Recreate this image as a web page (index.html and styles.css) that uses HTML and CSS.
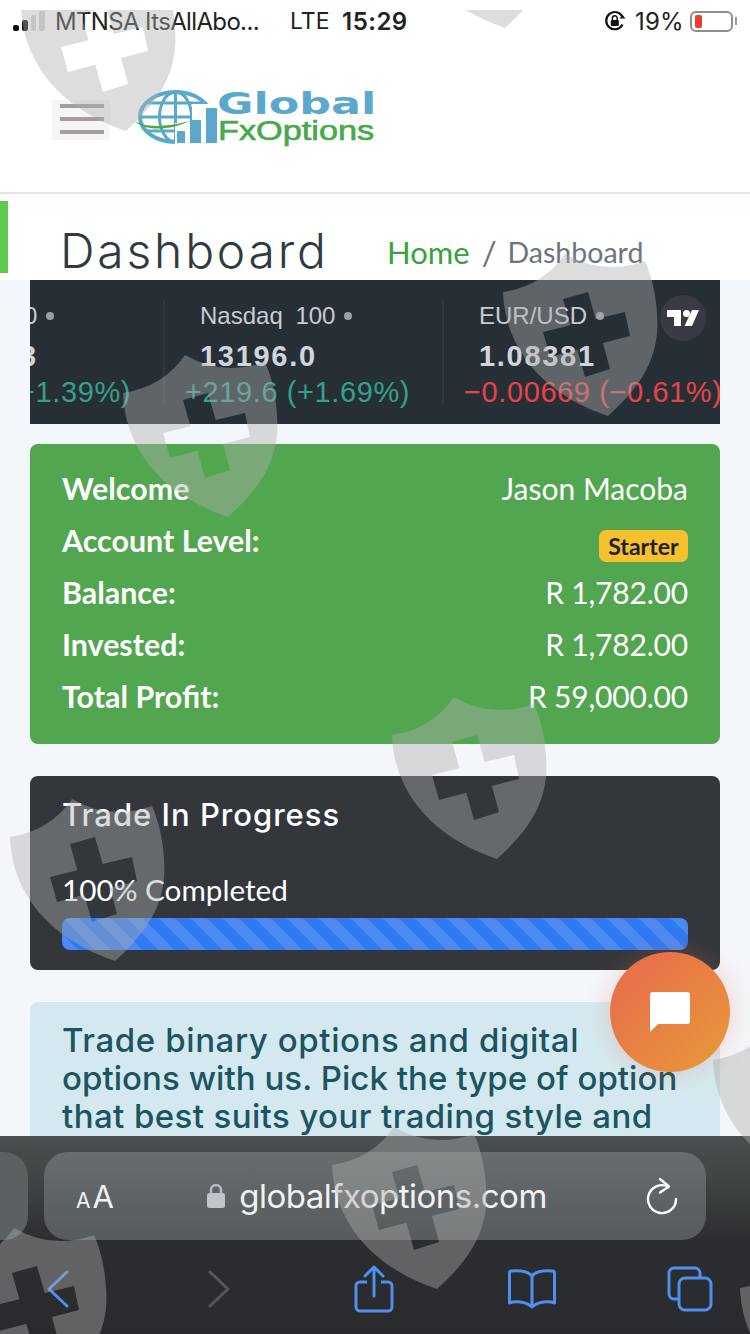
FILE: index.html
```html
<!DOCTYPE html>
<html lang="en">
<head>
<meta charset="utf-8">
<title>Dashboard</title>
<link rel="stylesheet" href="styles.css">
</head>
<body>
<div class="phone">
  <div class="status">
    <div class="status-left">
      <div class="signal"><i class="b1"></i><i class="b2"></i><i class="b3"></i><i class="b4"></i></div>
      <span class="carrier">MTNSA ItsAllAbo...</span>
      <span class="lte">LTE</span>
      <span class="clock">15:29</span>
    </div>
    <div class="status-right">
      <svg class="rot" width="22" height="22" viewBox="0 0 22 22"><path d="M18.5 14.5A8.6 8.6 0 1 1 18.6 7" fill="none" stroke="#111" stroke-width="2.2"/><path d="M21.5 8.5h-6l3-3.6z" fill="#111"/><rect x="6.8" y="10" width="8" height="6" rx="1" fill="#111"/><path d="M8.4 10V8.2a2.4 2.4 0 0 1 4.8 0V10" fill="none" stroke="#111" stroke-width="1.5"/></svg>
      <span class="pct">19%</span>
      <div class="battery"><i></i></div><div class="nub"></div>
    </div>
  </div>

  <header class="topbar">
    <button class="burger"><i></i><i></i><i></i></button>
    <div class="logo">
      <svg class="globe" width="82" height="56" viewBox="0 0 82 56">
        <g fill="none" stroke="#5aa9cd" stroke-width="3">
          <ellipse cx="40.500" cy="27" rx="35.500" ry="25" stroke-width="4"/>
          <ellipse cx="40.500" cy="27" rx="16" ry="25"/>
          <path d="M40.500 2v50M5 27h71M11 13h59M11 41h40"/>
        </g>
        <rect x="40" y="33" width="42" height="23" fill="#fff"/>
        <rect x="57" y="14" width="25" height="20" fill="#fff"/>
        <rect x="42" y="41" width="8" height="12" fill="#5aa9cd"/>
        <rect x="55" y="30" width="11" height="23" fill="#5aa9cd"/>
        <rect x="71" y="18" width="11" height="35" fill="#5aa9cd"/>
        <path d="M0 31C8 37 30 38 54 31C36 41 8 41 0 31Z" fill="#4dab3f"/>
      </svg>
      <div class="logo-text">
        <span class="logo-global">Global</span>
        <span class="logo-fx">FxOptions</span>
      </div>
    </div>
  </header>

  <section class="title-row">
    <div class="strip"></div>
    <h1>Dashboard</h1>
    <nav class="crumbs"><a>Home</a><span class="sep">/</span><span class="cur">Dashboard</span></nav>
  </section>

  <main class="content">
    <section class="ticker">
      <div class="tick first">
        <div class="name"><span class="name-in">S&amp;P 500</span><i></i></div>
        <div class="price">4105.03</div>
        <div class="chg up">+56.32 (+1.39%)</div>
      </div>
      <div class="tick">
        <div class="name">Nasdaq 100<i></i></div>
        <div class="price">13196.0</div>
        <div class="chg up">+219.6 (+1.69%)</div>
      </div>
      <div class="tick">
        <div class="name">EUR/USD<i></i></div>
        <div class="price">1.08381</div>
        <div class="chg down">−0.00669 (−0.61%)</div>
      </div>
      <div class="tv">
        <svg width="32" height="17" viewBox="0 0 32 17"><path d="M0 0h14v16H7V7H0z" fill="#fff"/><circle cx="19.500" cy="3.600" r="3.500" fill="#fff"/><path d="M25 0h7l-7 16h-7.500z" fill="#fff"/></svg>
      </div>
    </section>

    <section class="account">
      <div class="row"><b>Welcome</b><span>Jason Macoba</span></div>
      <div class="row"><b>Account Level:</b><span class="badge">Starter</span></div>
      <div class="row"><b>Balance:</b><span class="num">R 1,782.00</span></div>
      <div class="row"><b>Invested:</b><span class="num">R 1,782.00</span></div>
      <div class="row"><b>Total Profit:</b><span class="num">R 59,000.00</span></div>
    </section>

    <section class="progress-card">
      <h2>Trade In Progress</h2>
      <p>100% Completed</p>
      <div class="bar"></div>
    </section>

    <section class="info">
      <p><span class="wide">Trade binary options and digital</span><br><span class="tight">options with us. Pick the type of option</span><br>that best suits your trading style and<br>risk appetite.</p>
    </section>
  </main>

  <div class="safari">
    <div class="url-row">
      <div class="tab-edge"></div>
      <div class="url">
        <span class="aa"><small>A</small>A</span>
        <span class="addr">
          <svg width="18" height="26" viewBox="0 0 18 26"><path d="M4 11V7a5 5 0 0 1 10 0v4" fill="none" stroke="#b9bcc4" stroke-width="2.400"/><rect y="10" width="18" height="15" rx="2.500" fill="#c2c4cb"/></svg>
          globalfxoptions.com
        </span>
        <svg class="reload" width="32" height="38" viewBox="0 0 32 38"><path d="M22 9.500A14 14 0 1 0 30 22" fill="none" stroke="#fff" stroke-width="2.400" stroke-linecap="round"/><path d="M14 2l9 7.500-9 6" fill="none" stroke="#fff" stroke-width="2.400" stroke-linecap="round" stroke-linejoin="round"/></svg>
      </div>
    </div>
    <div class="tools">
      <div class="tool"><svg width="24" height="38" viewBox="0 0 24 38"><path d="M21 2L3 19l18 17" fill="none" stroke="#4f8ff0" stroke-width="3" stroke-linecap="round" stroke-linejoin="round"/></svg></div>
      <div class="tool"><svg width="32" height="38" viewBox="0 0 32 38"><path d="M10 2l18 17-18 17" fill="none" stroke="#55565b" stroke-width="3" stroke-linecap="round" stroke-linejoin="round"/></svg></div>
      <div class="tool"><svg width="40" height="48" viewBox="0 0 40 48"><path d="M13 17H6a4 4 0 0 0-4 4v21a4 4 0 0 0 4 4h28a4 4 0 0 0 4-4V21a4 4 0 0 0-4-4h-7" fill="none" stroke="#4f8ff0" stroke-width="3"/><path d="M20 31V3M11 11l9-9 9 9" fill="none" stroke="#4f8ff0" stroke-width="3" stroke-linecap="round" stroke-linejoin="round"/></svg></div>
      <div class="tool"><svg width="48" height="42" viewBox="0 0 48 42"><path d="M24 8C20 3 12 2 3 3c-1 0-1.500 1-1.500 2v30c5-2 16-2 22.500 4 6.500-6 17.500-6 22.500-4V5c0-1-.5-2-1.500-2-9-1-17 0-21 5zM24 8v31" fill="none" stroke="#4f8ff0" stroke-width="3" stroke-linejoin="round"/></svg></div>
      <div class="tool"><svg width="46" height="46" viewBox="0 0 46 46"><path d="M11 33H7a5 5 0 0 1-5-5V7a5 5 0 0 1 5-5h21a5 5 0 0 1 5 5v4" fill="none" stroke="#4f8ff0" stroke-width="3"/><rect x="12" y="12" width="32" height="32" rx="6" fill="none" stroke="#4f8ff0" stroke-width="3"/></svg></div>
    </div>
  </div>

  <svg class="watermark" width="750" height="1324" viewBox="0 10 750 1324">
    <defs>
      <path id="shield" fill="#adadad" fill-opacity=".42" fill-rule="evenodd" d="M62 0Q40 32 0 38C2 95 40 140 105 162C135 135 158 105 154 60C153 40 148 20 142 7Q100 22 62 0ZM60 45L85 38L92.700 65L122 58L127 82L100 89L107 115L82 123L74.300 95.700L47 103L40 78L67.400 71.300Z"/>
    </defs>
    <use href="#shield" x="21" y="-31"/>
    <use href="#shield" x="400" y="-134"/>
    <use href="#shield" x="123" y="355"/>
    <use href="#shield" x="503" y="254"/>
    <use href="#shield" x="392" y="697"/>
    <use href="#shield" x="10" y="799"/>
    <use href="#shield" x="713" y="1022"/>
    <use href="#shield" x="332" y="1127"/>
    <use href="#shield" x="-48" y="1228"/>
    <use href="#shield" x="740" y="1250"/>
  </svg>

  <button class="chat">
    <svg width="40" height="40" viewBox="0 0 40 40"><path d="M3 0h34a3 3 0 0 1 3 3v26a3 3 0 0 1-3 3H8l-8 8V3a3 3 0 0 1 3-3z" fill="#fff"/></svg>
  </button>
</div>
</body>
</html>
```
FILE: styles.css
```css
* { box-sizing: border-box; }
html, body { margin: 0; padding: 0; }
body { font-family: "Lato", "Liberation Sans", sans-serif; background: #f3f6fa; }
.phone { position: relative; width: 750px; height: 1334px; overflow: hidden; background: #f3f6fa; }

/* status bar */
.status { height: 40px; background: #fff; display: flex; justify-content: space-between; align-items: center; padding: 2px 13px 0 13px; font-family: "Inter", "Liberation Sans", sans-serif; font-size: 24px; color: #222; }
.status-left, .status-right { display: flex; align-items: center; }
.signal { display: flex; align-items: flex-end; gap: 3px; height: 20px; width: 32px; margin-right: 10px; }
.signal i { display: block; width: 6px; border-radius: 2px; background: #111; }
.signal .b1 { height: 6px; }
.signal .b2 { height: 11px; }
.signal .b3 { height: 16px; background: #d4d4d4; }
.signal .b4 { height: 20px; background: #d4d4d4; }
.carrier { width: 235px; letter-spacing: -.65px; white-space: nowrap; }
.lte { width: 52px; font-size: 23px; }
.clock { font-weight: 600; letter-spacing: .5px; }
.rot { margin-right: 9px; }
.pct { margin-right: 6px; letter-spacing: .3px; }
.battery { width: 43px; height: 21px; border: 2px solid #8e8e8e; border-radius: 6px; padding: 2px 3px; }
.battery i { display: block; width: 7px; height: 13px; background: #ee3d2f; border-radius: 2px; }
.nub { width: 2px; height: 8px; background: #999; margin-left: 2px; }

/* header */
.topbar { height: 154px; background: #fff; border-bottom: 2px solid #dfe7e9; display: flex; align-items: flex-start; padding: 50px 0 0 52px; }
.burger { width: 58px; height: 40px; background: #f6f6f6; border: 0; padding: 4px 6px 0 8px; display: flex; flex-direction: column; gap: 9px; margin-right: 25px; margin-top: 10px; }
.burger i { display: block; height: 4px; width: 44px; background: #a59c9e; }
.logo { display: flex; align-items: flex-start; }
.logo-text { display: flex; flex-direction: column; margin-left: 0; }
.logo-global { font-family: "DejaVu Sans", sans-serif; font-weight: 700; font-size: 30px; line-height: 28px; height: 28px; color: #5aa9cd; transform: scaleX(1.48); transform-origin: left top; }
.logo-fx { font-family: "Liberation Sans", sans-serif; font-size: 27px; line-height: 26px; color: #46a94a; -webkit-text-stroke: .6px #46a94a; margin-left: 1px; transform: scaleX(1.27); transform-origin: left top; }

/* title */
.title-row { height: 86px; background: #fff; display: flex; align-items: flex-start; }
.strip { width: 8px; height: 72px; background: #5fc84f; margin-top: 7px; margin-right: 52px; }
h1 { margin: 24px 0 0; font-family: "Inter", sans-serif; font-weight: 300; font-size: 48px; letter-spacing: 2.8px; line-height: 66px; color: #2f3b3f; width: 327px; white-space: nowrap; }
.crumbs { display: flex; align-items: center; height: 36px; margin-top: 40px; font-size: 28.500px; white-space: nowrap; }
.crumbs a { color: #3aa23b; font-size: 31px; }
.sep { color: #6c757d; margin: 0 11px 0 12px; font-size: 33px; }
.cur { color: #6c757d; }

/* ticker */
.content { padding: 0 30px; display: flex; flex-direction: column; }
.ticker { position: relative; height: 144px; background: #272f36; display: flex; align-items: flex-start; overflow: hidden; margin-bottom: 20px; font-family: "Liberation Sans", sans-serif; }
.tick { flex: none; width: 279px; height: 104px; margin-top: 20px; padding: 2px 0 0 35px; border-right: 2px solid #2f393f; white-space: nowrap; }
.tick.first { margin-left: -144px; }
.tick:last-of-type { border-right: 0; }
.name { font-size: 24px; line-height: 28px; color: #c8ccd3; word-spacing: 6px; display: flex; align-items: center; }
.name i { display: block; width: 8px; height: 8px; border-radius: 50%; background: #9a9ea6; margin-left: 9px; }
.name-in { margin-left: 16px; }
.price { font-weight: 700; font-size: 29px; line-height: 34px; margin-top: 9px; color: #d1d4dc; letter-spacing: 1.7px; }
.chg { font-size: 29px; line-height: 34px; margin-left: -15px; margin-top: 2px; letter-spacing: .6px; }
.up { color: #35a08b; }
.down { color: #e8434a; }
.tv { position: absolute; top: 15px; right: 14px; width: 46px; height: 46px; border-radius: 50%; background: #3a3a45; display: flex; align-items: center; justify-content: center; }

/* account card */
.account { height: 300px; background: #52a650; border-radius: 8px; padding: 18px 32px 22px; color: #fff; font-size: 30px; margin-bottom: 32px; }
.row { height: 52px; display: flex; justify-content: space-between; align-items: center; }
.row b { font-weight: 700; font-size: 30.400px; }
.num { letter-spacing: -.2px; }
.badge { background: #f6c02f; color: #222; font-weight: 700; font-size: 23px; height: 32px; line-height: 32px; padding: 0 9.500px; border-radius: 7px; margin-top: 12px; }

/* progress */
.progress-card { height: 194px; background: #33373c; border-radius: 8px; padding: 18px 32px 0; color: #fff; margin-bottom: 32px; }
.progress-card h2 { margin: 0; font-family: "Inter", sans-serif; font-weight: 500; font-size: 31px; letter-spacing: 1px; line-height: 42px; }
.progress-card p { margin: 36px 0 0; font-size: 29.700px; line-height: 36px; height: 46px; }
.bar { height: 32px; border-radius: 8px; background-color: #3079f0; background-image: linear-gradient(45deg, rgba(255,255,255,.13) 25%, transparent 25%, transparent 50%, rgba(255,255,255,.13) 50%, rgba(255,255,255,.13) 75%, transparent 75%, transparent); background-size: 32px 32px; }

/* info */
.info { background: #d4e9ef; border-radius: 8px 8px 0 0; padding: 19px 32px 20px; height: 240px; }
.info p { margin: 0; font-family: "Inter", sans-serif; font-weight: 500; font-size: 33px; letter-spacing: .4px; line-height: 38px; color: #1c5461; white-space: nowrap; }
.info .wide { letter-spacing: .6px; }
.info .tight { letter-spacing: .05px; }

/* browser chrome */
.safari { position: absolute; left: 0; right: 0; bottom: 0; height: 198px; background: linear-gradient(#4a504f 0, #3b3f40 60px, #2c2d30 104px, #2a2b2e 198px); }
.url-row { display: flex; gap: 16px; padding: 16px 44px 0 0; }
.tab-edge { width: 28px; height: 88px; background: #5b6062; border-radius: 0 24px 24px 0; }
.url { flex: 1; height: 88px; border-radius: 24px; background: linear-gradient(#676d6e, #565b5d); display: flex; align-items: center; justify-content: space-between; padding: 0 28px 0 32px; color: #f2f2f2; }
.aa { font-family: "Inter", sans-serif; font-size: 31px; width: 40px; margin-right: -8px; white-space: nowrap; }
.aa small { font-size: 21px; margin-right: 2px; }
.addr { display: flex; align-items: center; gap: 14px; font-family: "Inter", sans-serif; font-size: 33px; letter-spacing: -.5px; white-space: nowrap; }
.tools { display: flex; justify-content: space-between; padding: 25px 36px 0 34px; }
.tool { width: 48px; height: 48px; display: flex; align-items: center; justify-content: center; }

/* overlays */
.watermark { position: absolute; left: 0; top: 10px; pointer-events: none; }
.chat { position: absolute; left: 610px; top: 952px; width: 120px; height: 120px; border: 0; border-radius: 50%; padding: 0; background: linear-gradient(135deg, #e8684f, #e89a36); box-shadow: 0 0 24px rgba(232,104,79,.28); display: flex; align-items: center; justify-content: center; }
```
